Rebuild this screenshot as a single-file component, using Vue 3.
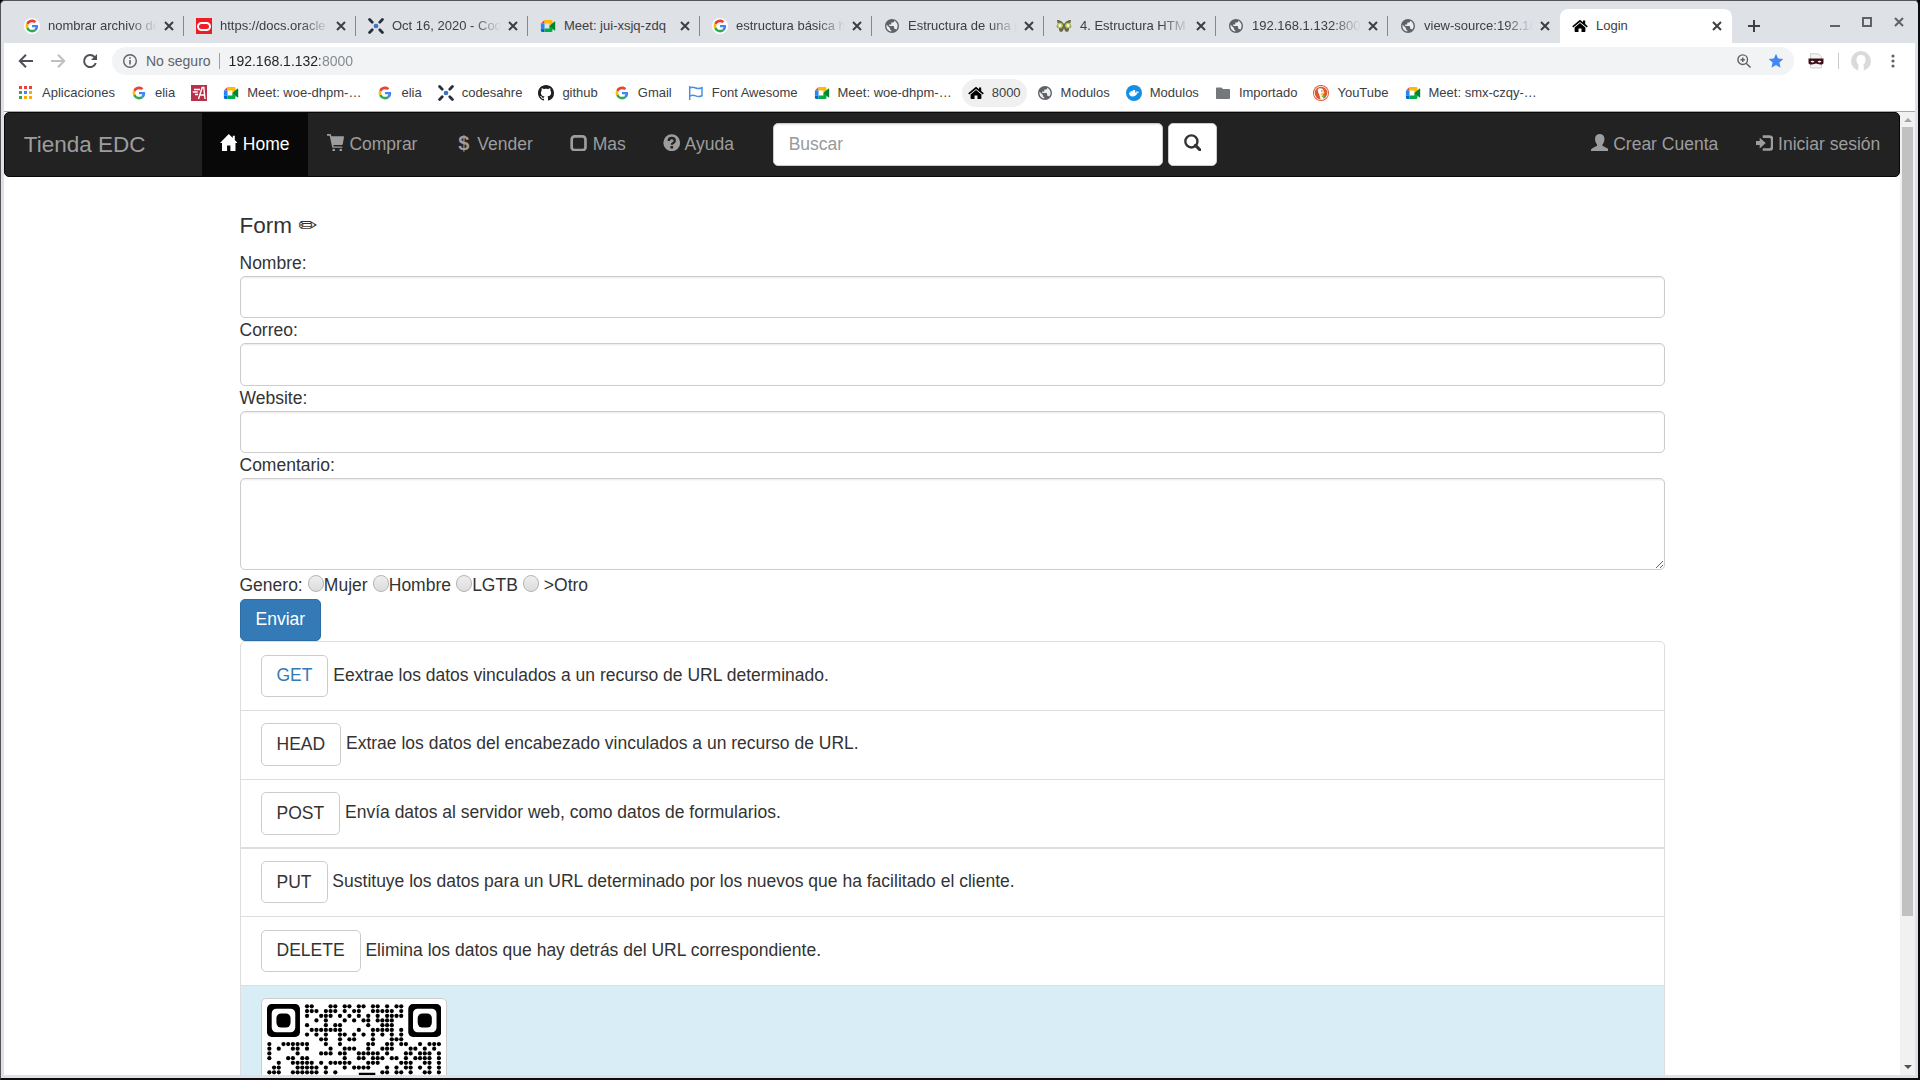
<script setup>
import { ref } from 'vue'

const tabs = [
  { icon: 'i-google', title: 'nombrar archivo de', halo: true, fade: true },
  { icon: 'i-oracle', title: 'https://docs.oracle', fade: true },
  { icon: 'i-codesahre', title: 'Oct 16, 2020 - Cod', fade: true },
  { icon: 'i-meet', title: 'Meet: jui-xsjq-zdq' },
  { icon: 'i-google', title: 'estructura básica h', halo: true, fade: true },
  { icon: 'i-globe', title: 'Estructura de una p', fade: true },
  { icon: 'i-butterfly', title: '4. Estructura HTM', fade: true },
  { icon: 'i-globe', title: '192.168.1.132:800', fade: true },
  { icon: 'i-globe', title: 'view-source:192.16', fade: true },
  { icon: 'i-house', title: 'Login', active: true },
]

const bookmarks = [
  { icon: 'i-apps', text: 'Aplicaciones' },
  { icon: 'i-google-small', text: 'elia' },
  { icon: 'i-redA', text: '' },
  { icon: 'i-meet', text: 'Meet: woe-dhpm-…' },
  { icon: 'i-google-small', text: 'elia' },
  { icon: 'i-codesahre', text: 'codesahre' },
  { icon: 'i-github', text: 'github' },
  { icon: 'i-google-small', text: 'Gmail' },
  { icon: 'i-flag', text: 'Font Awesome' },
  { icon: 'i-meet', text: 'Meet: woe-dhpm-…' },
  { icon: 'i-house', text: '8000', hover: true },
  { icon: 'i-globe', text: 'Modulos' },
  { icon: 'i-docker', text: 'Modulos' },
  { icon: 'i-folder', text: 'Importado' },
  { icon: 'i-duck', text: 'YouTube' },
  { icon: 'i-meet', text: 'Meet: smx-czqy-…' },
]

const links = [
  { icon: 'g-home', text: 'Home', active: true },
  { icon: 'g-cart', text: 'Comprar' },
  { icon: '', text: 'Vender' },
  { icon: 'g-unchecked', text: 'Mas' },
  { icon: 'g-question', text: 'Ayuda' },
]

const fields = [
  { id: 'nombre', label: 'Nombre:' },
  { id: 'correo', label: 'Correo:' },
  { id: 'website', label: 'Website:' },
]

const methods = [
  { name: 'GET', text: 'Eextrae los datos vinculados a un recurso de URL determinado.', link: true },
  { name: 'HEAD', text: 'Extrae los datos del encabezado vinculados a un recurso de URL.' },
  { name: 'POST', text: 'Envía datos al servidor web, como datos de formularios.' },
  { name: 'PUT', text: 'Sustituye los datos para un URL determinado por los nuevos que ha facilitado el cliente.' },
  { name: 'DELETE', text: 'Elimina los datos que hay detrás del URL correspondiente.' },
]

const url = ref('192.168.1.132:8000')
const genero = ref('')

// Dark modules of the code, one list of columns per row
const rows = [
  [8, 9, 13, 14, 16, 17, 19, 20, 22, 23, 25, 27, 28],
  [8, 9, 10, 12, 13, 14, 16, 18, 19, 22, 23, 24, 25, 26, 28],
  [8, 11, 12, 13, 15, 17, 19, 21, 23, 25, 26, 27, 28],
  [10, 12, 16, 18, 20, 21, 23, 24, 25, 26],
  [8, 12, 14, 15, 21, 24, 25, 26],
  [9, 10, 11, 12, 13, 14, 15, 19, 22, 23, 24, 25, 26, 28],
  [8, 10, 12, 15, 16, 18, 20, 22, 24, 26, 28],
  [11, 12, 15, 17, 18, 22, 26, 27, 28],
  [0, 3, 4, 5, 6, 7, 8, 12, 15, 21, 22, 25, 26, 28, 29, 32, 34, 35, 36],
  [0, 2, 5, 6, 8, 13, 16, 17, 18, 21, 24, 25, 26, 30, 31, 33, 35],
  [0, 6, 11, 12, 13, 15, 16, 19, 20, 21, 22, 23, 25, 29, 30, 32, 33, 34, 36],
  [0, 4, 5, 7, 8, 16, 19, 20, 22, 23, 24, 26, 27, 29, 31, 32, 33, 34, 36],
  [2, 5, 6, 7, 8, 9, 11, 13, 14, 15, 16, 17, 21, 22, 23, 28, 29, 30, 33, 34, 36],
  [1, 2, 6, 7, 8, 9, 10, 12, 16, 18, 19, 20, 21, 25, 27, 29, 30, 32, 34, 36],
  [0, 1, 2, 5, 6, 7, 8, 9, 10, 12, 14, 24, 25, 27, 28, 30, 33, 34, 36],
]
const dots = rows.flatMap((cols, y) => cols.map((x) => ({ x, y })))
</script>

<template>
  <div class="window">
    <svg class="defs" aria-hidden="true">
      <symbol id="i-google" viewBox="-6 -6 60 60">
        <path fill="#EA4335" d="M24 9.5c3.54 0 6.71 1.22 9.21 3.6l6.85-6.85C35.9 2.38 30.47 0 24 0 14.62 0 6.51 5.38 2.56 13.22l7.98 6.19C12.43 13.72 17.74 9.5 24 9.5z" />
        <path fill="#4285F4" d="M46.98 24.55c0-1.57-.15-3.09-.38-4.55H24v9.02h12.94c-.58 2.96-2.26 5.48-4.78 7.18l7.73 6c4.51-4.18 7.09-10.36 7.09-17.65z" />
        <path fill="#FBBC05" d="M10.53 28.59c-.48-1.45-.76-2.99-.76-4.59s.27-3.14.76-4.59l-7.98-6.19C.92 16.46 0 20.12 0 24c0 3.88.92 7.54 2.56 10.78l7.97-6.19z" />
        <path fill="#34A853" d="M24 48c6.48 0 11.93-2.13 15.89-5.81l-7.73-6c-2.15 1.45-4.92 2.3-8.16 2.3-6.26 0-11.57-4.22-13.47-9.91l-7.98 6.19C6.51 42.62 14.62 48 24 48z" />
      </symbol>
      <symbol id="i-google-small" viewBox="0 0 16 16">
        <use href="#i-google" x="0" y="0" width="16" height="16" />
      </symbol>
      <symbol id="i-oracle" viewBox="0 0 16 16">
        <rect width="16" height="16" fill="#ee1c25" />
        <rect x="2" y="5" width="12" height="7" rx="3.5" fill="none" stroke="#fff" stroke-width="2" />
      </symbol>
      <symbol id="i-codesahre" viewBox="0 0 16 16">
        <g stroke="#262f3d" stroke-width="2.8" stroke-linecap="round">
          <path d="M1.6 1.6l2.600 2.600M14.4 1.6l-2.600 2.600M1.6 14.4l2.600-2.600M14.4 14.4l-2.600-2.600" />
        </g>
        <circle cx="8" cy="8" r="2.3" fill="#3f72c4" />
      </symbol>
      <symbol id="i-meet" viewBox="0 0 16 16">
        <path fill="#ea4335" d="M4.5 2v3.6H.9z" />
        <path fill="#fbbc04" d="M4.5 2h6.8c.7 0 1.2.5 1.2 1.2v3L9.3 8V5.6H4.5z" />
        <path fill="#2684fc" d="M.9 5.6h3.6v5H.9z" />
        <path fill="#0066da" d="M.9 10.6h3.6V14H2.1C1.4 14 .9 13.5.9 12.8z" />
        <path fill="#00ac47" d="M4.5 10.6h4.8V8l3.2 2.2v2.6c0 .7-.5 1.2-1.2 1.2H4.5z" />
        <path fill="#00832d" d="M9.3 8l5-4.3c.4-.3.9-.1.9.4v7.8c0 .5-.5.7-.9.4L12.5 10.8z" />
      </symbol>
      <symbol id="i-globe" viewBox="0.500 0.500 23 23">
        <circle cx="12" cy="12" r="9" fill="#eceef0" />
        <path fill="#5f6368" d="M12 2C6.48 2 2 6.48 2 12s4.48 10 10 10 10-4.48 10-10S17.52 2 12 2zm-1 17.93c-3.95-.49-7-3.85-7-7.93 0-.62.08-1.21.21-1.79L9 15v1c0 1.1.9 2 2 2v1.93zm6.9-2.54c-.26-.81-1-1.39-1.9-1.39h-1v-3c0-.55-.45-1-1-1H8v-2h2c.55 0 1-.45 1-1V7h2c1.1 0 2-.9 2-2v-.41c2.930 1.190 5 4.060 5 7.410 0 2.080-.8 3.970-2.100 5.390z" />
      </symbol>
      <symbol id="i-butterfly" viewBox="0 0 16 16">
        <path fill="#6b6a4b" d="M8 6C6 3 3 1.5 1 2c.2 1.8.6 3 1 4-1.3.8-1.7 2-1 3.2.8.9 1.6.8 2 1.3-.3 1.700.5 3.300 2 3.400C6.800 14 7.500 12 8 10c.5 2 1.200 4 3 3.900 1.500-.1 2.300-1.700 2-3.400.4-.5 1.200-.4 2-1.300.7-1.200.3-2.400-1-3.200.4-1 .8-2.200 1-4-2-.5-5 1-7 4z" />
        <circle cx="4" cy="7.5" r="2.8" fill="#b5d04a" /><circle cx="12" cy="7.5" r="2.8" fill="#b5d04a" />
        <circle cx="4" cy="7.5" r="1.4" fill="#f4f7dd" /><circle cx="12" cy="7.5" r="1.4" fill="#f4f7dd" />
      </symbol>
      <symbol id="i-house" viewBox="0 0 16 16">
        <path fill="#000" d="M8 5l5.400 4.500V13c0 .6-.4 1-1 1H9.500v-3.500h-3V14H3.600c-.6 0-1-.4-1-1V9.500z" />
        <path fill="#000" d="M8 1.800L11 4.300V2.600h2.200v3.500L15.800 8.300l-1 1.200L8 3.900 1.200 9.500l-1-1.200z" />
      </symbol>
      <symbol id="i-apps" viewBox="0 0 16 16">
        <path fill="#ea4335" d="M1 1h3v3H1zM6 1h3v3H6zM11 1h3v3h-3z" />
        <path fill="#34a853" d="M1 6h3v3H1zM1 11h3v3H1z" />
        <path fill="#4285f4" d="M6 6h3v3H6z" />
        <path fill="#fbab05" d="M11 6h3v3h-3zM6 11h3v3H6zM11 11h3v3h-3z" />
      </symbol>
      <symbol id="i-redA" viewBox="0 0 16 16">
        <rect width="16" height="16" fill="#b9304a" />
        <path d="M7.500 14l3.700-11.500h1.600L14 14M8.500 10h4.800M3 4.500h6M1.800 7h5M4 9.500h3" fill="none" stroke="#fff" stroke-width="1.400" />
      </symbol>
      <symbol id="i-github" viewBox="0 0 16 16">
        <path fill="#1b1f23" d="M8 0C3.580 0 0 3.580 0 8c0 3.540 2.290 6.530 5.470 7.590.4.070.55-.17.55-.38 0-.19-.01-.82-.01-1.490-2.010.37-2.530-.49-2.690-.94-.09-.23-.48-.94-.82-1.130-.28-.15-.68-.52-.01-.53.63-.01 1.080.58 1.230.82.72 1.210 1.870.87 2.330.66.07-.52.28-.87.51-1.070-1.780-.2-3.640-.89-3.640-3.950 0-.87.31-1.590.82-2.150-.08-.2-.36-1.020.08-2.120 0 0 .67-.21 2.200.82.64-.18 1.320-.27 2-.27s1.360.09 2 .27c1.530-1.040 2.200-.82 2.200-.82.44 1.100.16 1.920.08 2.120.51.56.82 1.270.82 2.150 0 3.070-1.870 3.750-3.650 3.950.29.25.54.73.54 1.480 0 1.070-.01 1.930-.01 2.200 0 .21.15.46.55.38A8.010 8.010 0 0016 8c0-4.420-3.580-8-8-8z" />
      </symbol>
      <symbol id="i-flag" viewBox="0 0 16 16">
        <path d="M1.700 1v14M1.700 3c2.500-1.200 4-.9 6 0s3.700.8 6.300-.3v8c-2.600 1.100-4.300 1.100-6.300.2s-3.500-1-6 .2" fill="none" stroke="#4a90e2" stroke-width="1.500" />
      </symbol>
      <symbol id="i-docker" viewBox="0 0 16 16">
        <circle cx="8" cy="8" r="8" fill="#1390e6" />
        <path fill="#fff" d="M3 7.500h1.500V6.300H6V7.500 6.300h.8V5h2.400v2.500h1.300c.3-.8.200-1.200-.1-1.800.8.200 1 .8 1.200 1.200.5-.1 1 0 1.400.2-.4.700-1 .9-1.700.9C10.700 10.300 9 11.400 6.600 11.400 4.300 11.400 3 10 3 7.500z" />
      </symbol>
      <symbol id="i-folder" viewBox="0 0 16 16">
        <path fill="#75787b" d="M2 2.500h4.500L8 4h6c.6 0 1 .4 1 1v8c0 .6-.4 1-1 1H2c-.6 0-1-.4-1-1V3.500c0-.6.400-1 1-1z" />
      </symbol>
      <symbol id="i-duck" viewBox="0 0 16 16">
        <circle cx="8" cy="8" r="8" fill="#de5833" /><circle cx="8" cy="8" r="7.100" fill="#fff" /><circle cx="8" cy="8" r="6.300" fill="#de5833" />
        <path fill="#fff" d="M5 4.200c1-1.600 4.800-1.400 5.500 1.200.3 1.200.2 2 .1 3.200l-1 .9 1 4.200c-1 .4-2 .6-3 .4L5.800 8.500C5.200 7 4.400 5.300 5 4.200z" />
        <path fill="#fdd20a" d="M8 8.200c1-.6 3-.9 4-.5-.5.900-2.200 1.300-3.200 1.600.7.400 1.700.2 2 .6-.8.800-3 .6-3.200-.2z" />
        <path fill="#65bc46" d="M8.500 11l3-1v2.500L9 12z" /><circle cx="8.800" cy="5.900" r=".7" fill="#2d4f8e" />
      </symbol>

      <symbol id="g-home" viewBox="0 0 52 52">
        <path d="M26 0l12 12V5h6v13l8 9h-6v22q0 3-3 3H31V34H21v18H9q-3 0-3-3V27H0z" />
      </symbol>
      <symbol id="g-cart" viewBox="0 0 52 52">
        <path d="M0 0h9q2 0 3 2l1 5h36q2 0 1.500 3L47 30q-.5 3-3 3H19l1 4h24q2 0 2 2t-2 2H18q-2 0-2.500-2L8 5H0z" />
        <circle cx="20" cy="48" r="4" /><circle cx="41" cy="48" r="4" />
      </symbol>
      <symbol id="g-unchecked" viewBox="0 0 52 52">
        <rect x="5" y="7" width="41" height="41" rx="9" fill="none" stroke="currentColor" stroke-width="8" />
      </symbol>
      <symbol id="g-question" viewBox="0 0 52 52">
        <circle cx="26" cy="26" r="25" />
        <path d="M17 21q0-9 9-9t9 8q0 4-4.500 6.500T26 32" fill="none" stroke="#222" stroke-width="7" />
        <path d="M22 36h8v7h-8z" fill="#222" />
      </symbol>
      <symbol id="g-search" viewBox="0 0 52 52">
        <circle cx="22" cy="22" r="18" fill="none" stroke="currentColor" stroke-width="7" />
        <path d="M34 34l14 14" stroke="currentColor" stroke-width="9" stroke-linecap="round" />
      </symbol>
      <symbol id="g-user" viewBox="0 0 52 52">
        <path d="M26 0c8 0 14 6 14 14 0 7-2 13-6 17v4l14 7q4 2 4 5v5H0v-5q0-3 4-5l14-7v-4c-4-4-6-10-6-17C12 6 18 0 26 0z" />
      </symbol>
      <symbol id="g-login" viewBox="0 0 52 52">
        <path d="M0 21h11V11l18 16-18 16V33H0z" />
        <path d="M20 8h20q8 0 8 8v22q0 8-8 8H20" fill="none" stroke="currentColor" stroke-width="8" />
      </symbol>
    </svg>

    <header class="strip">
      <nav class="tabs" aria-label="Pestañas">
        <div v-for="(t, i) in tabs" :key="i" class="tab" :class="{ active: t.active }">
          <svg class="ico" :class="{ halo: t.halo }"><use :href="'#' + t.icon" /></svg>
          <button type="button" class="tab-title" :class="{ fade: t.fade }">{{ t.title }}</button>
          <button type="button" class="tab-close" aria-label="Cerrar pestaña">
            <svg viewBox="0 0 16 16" class="ico"><path d="M4 4l8 8M12 4l-8 8" fill="none" stroke="#3c4043" stroke-width="2" /></svg>
          </button>
        </div>
      </nav>
      <button type="button" class="plus" aria-label="Nueva pestaña">
        <svg viewBox="0 0 16 16" class="ico"><path d="M2 8h12M8 2v12" stroke="#3c4043" stroke-width="2" /></svg>
      </button>
      <div class="controls">
        <button type="button" aria-label="Minimizar"><svg viewBox="0 0 16 16" class="ico"><path d="M3 12h10" stroke="#5f6368" stroke-width="2" /></svg></button>
        <button type="button" aria-label="Maximizar"><svg viewBox="0 0 16 16" class="ico"><path d="M4 4h8v8H4z" fill="none" stroke="#5f6368" stroke-width="2" /></svg></button>
        <button type="button" aria-label="Cerrar"><svg viewBox="0 0 16 16" class="ico"><path d="M4 4l8 8M12 4l-8 8" stroke="#5f6368" stroke-width="2" /></svg></button>
      </div>
    </header>

    <div class="toolbar">
      <button type="button" class="tool" aria-label="Atrás"><svg viewBox="0 0 16 16" class="ico"><path d="M15 8H2.500M8 1.800L1.800 8 8 14.200" fill="none" stroke="#4d5156" stroke-width="2" /></svg></button>
      <button type="button" class="tool" aria-label="Adelante"><svg viewBox="0 0 16 16" class="ico"><path d="M1 8h12.500M8 1.800L14.200 8 8 14.200" fill="none" stroke="#bdbfc2" stroke-width="2" /></svg></button>
      <button type="button" class="tool" aria-label="Recargar"><svg viewBox="0 0 16 16" class="ico"><path d="M13.800 10A6 6 0 1 1 12.500 4" fill="none" stroke="#4d5156" stroke-width="2" /><path d="M15 1v6H9z" fill="#4d5156" /></svg></button>
      <div class="omnibox">
        <svg viewBox="0 0 16 16" class="ico"><circle cx="8" cy="8" r="6.300" fill="none" stroke="#5f6368" stroke-width="1.400" /><path d="M8 7v4.500M8 4.300v1.500" stroke="#5f6368" stroke-width="1.600" /></svg>
        <label for="url" class="insecure">No seguro</label>
        <input id="url" v-model="url" type="text" class="url" />
        <button type="button" aria-label="Zoom"><svg viewBox="0 0 16 16" class="ico"><circle cx="6.700" cy="6.700" r="4.800" fill="none" stroke="#5f6368" stroke-width="1.400" /><path d="M10.200 10.200l4.300 4.300M4.500 6.700h4.400M6.700 4.500v4.400" stroke="#5f6368" stroke-width="1.500" /></svg></button>
        <button type="button" aria-label="Favorito"><svg viewBox="0 0 16 16" class="ico"><path fill="#4285f4" d="M8 .8l2.100 4.800 5.200.5-3.900 3.500 1.100 5.200L8 12.100l-4.500 2.700 1.100-5.200L.7 6.100l5.200-.5z" /></svg></button>
      </div>
      <button type="button" class="extension" aria-label="Extensión">
        <svg viewBox="0 0 16 16" class="ico"><path d="M2.500 6V.800h8L13.500 4v9.500l-.5 1.500H3l-.5-1.500z" fill="#f4f4f4" stroke="#bbb" stroke-width=".7" /><path fill="#3d1018" d="M.5 5.500h15v4c0 1.500-1 2-3 2-2.500 0-3-1-4.500-1s-2 1-4.500 1c-2 0-3-.5-3-2z" /><path fill="#fff" d="M2.500 8.500q2-1.700 4 .2-2 1.500-4-.2zM9.500 8.700q2-1.900 4-.2-2 1.700-4 .2z" /></svg>
      </button>
      <span class="divider"></span>
      <button type="button" class="avatar" aria-label="Perfil">
        <svg viewBox="0 0 20 20" width="20" height="20"><circle cx="10" cy="10" r="10" fill="#dadada" /><path fill="#fff" d="M10 4c3 0 4.500 2 4.500 4.800 0 2.500-.8 4-2 4.800L13 19.500q-3 .8-6 0l.6-5.900c-1.300-.9-2.100-2.300-2.100-4.800C5.500 6 7 4 10 4z" /></svg>
      </button>
      <button type="button" class="dots" aria-label="Menú">
        <svg viewBox="0 0 16 16" class="ico"><g fill="#5f6368"><circle cx="8" cy="3" r="1.600" /><circle cx="8" cy="8" r="1.600" /><circle cx="8" cy="13" r="1.600" /></g></svg>
      </button>
    </div>

    <nav class="bookmarks" aria-label="Marcadores">
      <a v-for="(b, i) in bookmarks" :key="i" href="#" class="bookmark" :class="{ hover: b.hover }">
        <svg class="ico"><use :href="'#' + b.icon" /></svg>
        <span v-if="b.text">{{ b.text }}</span>
      </a>
    </nav>

    <div class="viewport">
      <div class="page">
        <nav class="navbar">
          <a href="#" class="brand">Tienda EDC</a>
          <a v-for="l in links" :key="l.text" href="#" class="link" :class="{ active: l.active }">
            <svg v-if="l.icon" class="glyph"><use :href="'#' + l.icon" /></svg><b v-else class="usd">$</b>
            {{ l.text }}
          </a>
          <form class="search" @submit.prevent>
            <input type="text" class="control" placeholder="Buscar" aria-label="Buscar" />
            <button type="submit" class="btn" aria-label="Buscar"><svg class="glyph"><use href="#g-search" /></svg></button>
          </form>
          <div class="right">
            <a href="#" class="link"><svg class="glyph"><use href="#g-user" /></svg> Crear Cuenta</a>
            <a href="#" class="link"><svg class="glyph"><use href="#g-login" /></svg> Iniciar sesión</a>
          </div>
        </nav>

        <main class="container">
          <h4>Form <span class="pencil">✏</span></h4>
          <form @submit.prevent>
            <template v-for="f in fields" :key="f.id">
              <label :for="f.id" class="field-label">{{ f.label }}</label>
              <input :id="f.id" type="text" class="control" />
            </template>
            <label for="comentario" class="field-label">Comentario:</label>
            <textarea id="comentario" class="control area" rows="3"></textarea>
            <div>
              Genero:
              <input id="mujer" v-model="genero" type="radio" value="mujer" /><label for="mujer">Mujer</label>
              {{ ' ' }}<input id="hombre" v-model="genero" type="radio" value="hombre" /><label for="hombre">Hombre</label>
              {{ ' ' }}<input id="lgtb" v-model="genero" type="radio" value="lgtb" /><label for="lgtb">LGTB</label>
              {{ ' ' }}<input id="otro" v-model="genero" type="radio" value="otro" /> <label for="otro">&gt;Otro</label>
            </div>
            <button type="submit" class="btn primary">Enviar</button>
          </form>
          <ul class="list">
            <li v-for="m in methods" :key="m.name">
              <button type="button" class="btn" :class="{ blue: m.link }">{{ m.name }}</button> {{ m.text }}
            </li>
            <li class="info">
              <svg class="thumbnail" viewBox="0 0 37 37" role="img" aria-label="Código QR">
                <g v-for="x in [0, 30]" :key="x">
                  <rect :x="x" y="0" width="7" height="7" rx="1" />
                  <rect :x="x + 1" y="1" width="5" height="5" rx="1" fill="#fff" />
                  <rect :x="x + 2" y="2" width="3" height="3" rx="1" />
                </g>
                <circle v-for="(d, i) in dots" :key="i" :cx="d.x + 0.5" :cy="d.y + 0.5" r="0.45" />
                <rect x="19.500" y="14.600" width="3.500" height="4" />
              </svg>
            </li>
          </ul>
        </main>
      </div>
      <div class="scrollbar" aria-hidden="true">
        <svg viewBox="0 0 15 15" class="arrow"><path d="M4 10l4-4 4 4z" fill="#a3a3a3" /></svg>
        <div class="thumb"></div>
        <div class="rest"></div>
        <svg viewBox="0 0 15 15" class="arrow"><path d="M4 5l4 4 4-4z" fill="#505050" /></svg>
      </div>
    </div>
  </div>
</template>

<style>
body {
  margin: 0;
  background: #000;
}
</style>

<style scoped>
* {
  box-sizing: border-box;
}
.window {
  display: flex;
  flex-direction: column;
  height: 100vh;
  padding: 0 3px 3px;
  overflow: hidden;
  background: #dee1e6;
  border: solid #555459;
  border-width: 1px 2px 2px 1px;
  border-right-color: #0c0c0e;
  border-bottom-color: #0c0c0e;
  border-radius: 5px 5px 0 0;
  font: 13px/16px "Liberation Sans", Arial, sans-serif;
  color: #3c4043;
}
.defs {
  position: absolute;
  width: 0;
  height: 0;
}
.ico {
  display: block;
  flex: none;
  width: 16px;
  height: 16px;
}
button {
  padding: 0;
  border: 0;
  background: none;
  font: inherit;
  color: inherit;
}
a {
  color: inherit;
  text-decoration: none;
}

/* Tab strip */
.strip {
  display: flex;
  flex: none;
  height: 42px;
  padding: 8px 0 0 8px;
}
.tabs {
  display: flex;
  flex: 0 1 1720px;
  min-width: 0;
}
.tab {
  display: flex;
  flex: 1 1 0;
  align-items: center;
  min-width: 0;
  padding: 0 7px 0 12px;
  background: linear-gradient(#85888c, #85888c) right center / 1px 20px no-repeat;
}
.tab.active {
  background: #fff;
  border-radius: 8px 8px 0 0;
}
.tab:nth-last-child(2) {
  background: none;
}
.halo {
  background: #fff;
  border-radius: 50%;
}
.tab-title {
  flex: 1;
  min-width: 0;
  margin: 0 4px 0 8px;
  overflow: hidden;
  text-align: left;
  white-space: nowrap;
}
.fade {
  -webkit-mask-image: linear-gradient(to left, transparent, #000 28px);
  mask-image: linear-gradient(to left, transparent, #000 28px);
}
.plus {
  margin-left: 14px;
}
.controls {
  display: flex;
  gap: 16px;
  margin: 5px 8px 0 auto;
  height: 16px;
}

/* Toolbar */
.toolbar {
  display: flex;
  flex: none;
  align-items: center;
  height: 36px;
  padding: 0 14px;
  background: #fff;
}
.tool {
  margin-right: 16px;
}
.omnibox {
  display: flex;
  flex: 1;
  align-items: center;
  height: 28px;
  margin-right: 14px;
  margin-left: -2px;
  padding: 0 10px;
  gap: 16px;
  background: #f1f3f4;
  border-radius: 14px;
  font-size: 14px;
}
.insecure {
  margin-left: -8px;
  padding-right: 8px;
  border-right: 1px solid #9aa0a6;
  color: #5f6368;
}
.url {
  flex: 1;
  min-width: 0;
  margin-left: -7px;
  padding: 0;
  border: 0;
  outline: 0;
  font: inherit;
  color: #202124;
  background: linear-gradient(to right, #202124 91px, #80868b 91px);
  -webkit-background-clip: text;
  background-clip: text;
  -webkit-text-fill-color: transparent;
}
.divider {
  width: 1px;
  height: 16px;
  margin: 0 12px 0 14px;
  background: #c8cacd;
}
.avatar svg {
  display: block;
}
.dots {
  margin-left: 14px;
}

/* Bookmarks */
.bookmarks {
  display: flex;
  flex: none;
  gap: 4px;
  padding: 0 8px 4px;
  background: #fff;
  border-bottom: 1px solid #a6a6a6;
}
.bookmark {
  display: flex;
  gap: 8px;
  align-items: center;
  height: 28px;
  padding: 0 6px;
  border-radius: 14px;
  white-space: nowrap;
}
.bookmark.hover {
  background: #f0f0f0;
}

/* Page shown at 125% */
.viewport {
  display: flex;
  flex: 1;
  min-height: 0;
  overflow: hidden;
  background: #fff;
}
.page {
  flex: 1;
  min-width: 0;
  zoom: 1.25;
  font: 14px/20px "Liberation Sans", Arial, sans-serif;
  color: #333;
}
.navbar {
  display: flex;
  min-height: 52px;
  margin-bottom: 20px;
  background: #222;
  border: 1px solid #080808;
  border-radius: 4px;
  color: #9d9d9d;
  white-space: nowrap;
}
.brand {
  margin-right: 30px;
  padding: 15px;
  font-size: 18px;
}
.link {
  padding: 15px;
}
.link.active {
  background: #080808;
  color: #fff;
}
.glyph {
  display: inline-block;
  width: 14px;
  height: 14px;
  vertical-align: -1px;
  fill: currentColor;
}
.usd {
  display: inline-block;
  width: 14px;
  font-size: 16px;
  line-height: 16px;
  text-align: center;
}
.search {
  display: flex;
  gap: 4px;
  padding: 8px 16px;
}
.search .control {
  width: 312px;
}
.right {
  display: flex;
  margin-left: auto;
}
.control {
  display: block;
  width: 100%;
  height: 34px;
  padding: 6px 12px;
  background: #fff;
  border: 1px solid #ccc;
  border-radius: 4px;
  box-shadow: inset 0 1px 1px rgba(0, 0, 0, 0.075);
  font: inherit;
  color: #555;
}
.control::placeholder {
  color: #999;
}
.area {
  height: auto;
}
.btn {
  display: inline-block;
  min-height: 34px;
  padding: 6px 12px;
  background: #fff;
  border: 1px solid #ccc;
  border-radius: 4px;
  line-height: 20px;
  vertical-align: middle;
  color: #333;
}
.btn.blue {
  color: #337ab7;
}
.btn.primary {
  display: block;
  background: #337ab7;
  border-color: #2e6da4;
  color: #fff;
}
.container {
  max-width: 1170px;
  margin: 0 auto;
  padding: 9px 15px 0;
}
h4 {
  margin: 0 0 10px;
  font-size: 18px;
  font-weight: 500;
  line-height: 20px;
}
.pencil {
  font-family: "DejaVu Sans", sans-serif;
  line-height: 1;
}
.field-label {
  display: block;
}
input[type="radio"] {
  appearance: none;
  width: 13px;
  height: 13px;
  margin: 4px 0 0;
  background: linear-gradient(#eee, #dcdcdc);
  border: 1px solid #b4b4b4;
  border-radius: 50%;
}
.list {
  margin: 0;
  padding: 0;
  list-style: none;
}
.list li {
  min-height: 56px;
  margin-bottom: -1px;
  padding: 10px 15px 10px 16px;
  border: 1px solid #ddd;
}
.list li:first-child {
  border-radius: 4px 4px 0 0;
}
.list .info {
  background: #d9edf7;
}
.thumbnail {
  display: block;
  width: 149px;
  padding: 4px;
  background: #fff;
  border: 1px solid #ccc;
  border-radius: 4px;
}

.scrollbar {
  display: flex;
  flex: none;
  flex-direction: column;
  width: 15px;
  background: #f1f1f1;
}
.arrow {
  flex: none;
  width: 15px;
  height: 15px;
}
.thumb {
  flex: 11;
  margin: 0 2px;
  background: #c1c1c1;
}
.rest {
  flex: 2;
}
</style>
